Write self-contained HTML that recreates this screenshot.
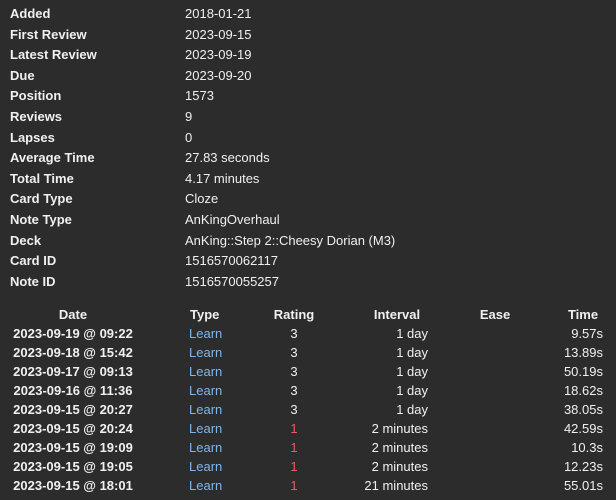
<!DOCTYPE html>
<html><head><meta charset="utf-8"><style>
html,body{margin:0;padding:0;background:#2c2c2c;width:616px;height:500px;overflow:hidden}
body{font-family:"Liberation Sans",sans-serif;font-size:13px;color:#f0f0f0;position:relative}
.l,.v,.c{position:absolute;white-space:nowrap;line-height:16px}
.l{left:10px;font-weight:bold}
.v{left:185px}
.b{font-weight:bold}
.blue{color:#7fb6ec}
.red{color:#ef5a5a}
</style></head><body>
<div class="l" style="top:6px">Added</div><div class="v" style="top:6px">2018-01-21</div>
<div class="l" style="top:27px">First Review</div><div class="v" style="top:27px">2023-09-15</div>
<div class="l" style="top:47px">Latest Review</div><div class="v" style="top:47px">2023-09-19</div>
<div class="l" style="top:68px">Due</div><div class="v" style="top:68px">2023-09-20</div>
<div class="l" style="top:88px">Position</div><div class="v" style="top:88px">1573</div>
<div class="l" style="top:109px">Reviews</div><div class="v" style="top:109px">9</div>
<div class="l" style="top:130px">Lapses</div><div class="v" style="top:130px">0</div>
<div class="l" style="top:150px">Average Time</div><div class="v" style="top:150px">27.83 seconds</div>
<div class="l" style="top:171px">Total Time</div><div class="v" style="top:171px">4.17 minutes</div>
<div class="l" style="top:191px">Card Type</div><div class="v" style="top:191px">Cloze</div>
<div class="l" style="top:212px">Note Type</div><div class="v" style="top:212px">AnKingOverhaul</div>
<div class="l" style="top:233px">Deck</div><div class="v" style="top:233px">AnKing::Step 2::Cheesy Dorian (M3)</div>
<div class="l" style="top:253px">Card ID</div><div class="v" style="top:253px">1516570062117</div>
<div class="l" style="top:274px">Note ID</div><div class="v" style="top:274px">1516570055257</div>
<div id="t"></div>
<script>
var rows=[["2023-09-19 @ 09:22","3","1 day","9.57s"],["2023-09-18 @ 15:42","3","1 day","13.89s"],["2023-09-17 @ 09:13","3","1 day","50.19s"],["2023-09-16 @ 11:36","3","1 day","18.62s"],["2023-09-15 @ 20:27","3","1 day","38.05s"],["2023-09-15 @ 20:24","1","2 minutes","42.59s"],["2023-09-15 @ 19:09","1","2 minutes","10.3s"],["2023-09-15 @ 19:05","1","2 minutes","12.23s"],["2023-09-15 @ 18:01","1","21 minutes","55.01s"]];
function c(txt,x,y,align,cls){var d=document.createElement('div');d.className='c '+(cls||'');d.textContent=txt;d.style.top=y+'px';
if(align=='c'){d.style.left=(x-100)+'px';d.style.width='200px';d.style.textAlign='center';}
else if(align=='r'){d.style.right=(616-x)+'px';}
else d.style.left=x+'px';document.body.appendChild(d);}
var hy=307;c('Date',73,hy,'c','b');c('Type',190,hy,'l','b');c('Rating',294,hy,'c','b');c('Interval',397,hy,'c','b');c('Ease',495,hy,'c','b');c('Time',583,hy,'c','b');
rows.forEach(function(r,i){var y=326+i*19;c(r[0],73,y,'c','b');c('Learn',189,y,'l','blue');c(r[1],294,y,'c',r[1]=='1'?'red':'');c(r[2],428,y,'r');c(r[3],603,y,'r');});
</script>
</body></html>
